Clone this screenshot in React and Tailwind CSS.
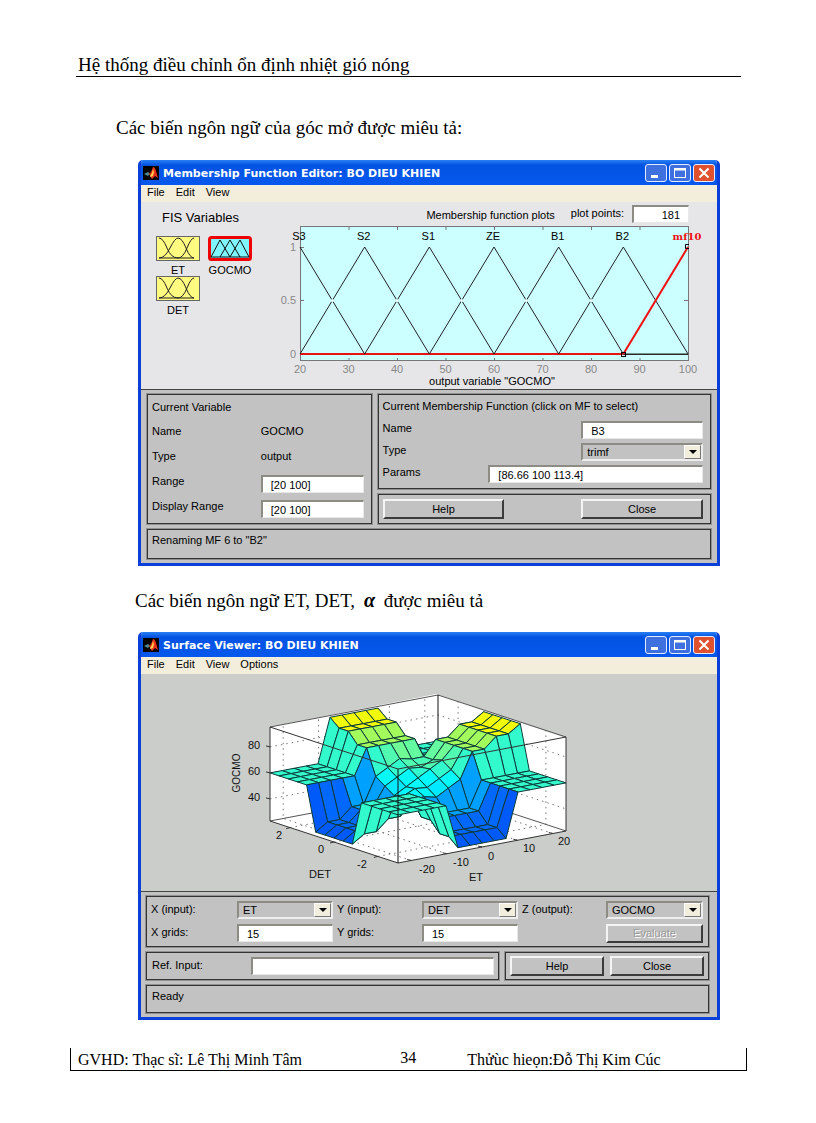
import React from "react";

const FRAME = "border border-[#333] outline-1 outline-[#909090]";
const FIELD =
  "h-[18px] min-w-0 rounded-none border-t-2 border-l-2 border-r border-b border-t-[#8c8c84] border-l-[#8c8c84] border-r-[#e8e8e8] border-b-[#e8e8e8] bg-white px-2 text-[11px] leading-none text-black outline-none";
const LABEL = "text-[11px] leading-4 text-black";

function MatlabLogo() {
  return (
    <svg viewBox="0 0 16 14" className="h-[14px] w-4 shrink-0" aria-hidden="true">
      <rect width="16" height="14" fill="#000" />
      <path d="M1 8l4-2 2 2-2 2z" fill="#4a8f98" />
      <path d="M5 8l3-2 2-4 1-1v6l-3 4-1-2z" fill="#b03a12" />
      <path d="M10 1q2 0 3 4l2 7-3-2-3 3-2-3z" fill="#e8301a" />
      <path d="M10 3l1 3-1 4-2 1-1-1 2-3z" fill="#ffd24a" />
    </svg>
  );
}

function CaptionButton({ kind }) {
  const tone = kind === "Close" ? "bg-[#e0522f]" : "bg-[#3f70e0]";
  return (
    <button
      type="button"
      aria-label={kind}
      className={`flex h-[18px] w-[22px] items-center justify-center rounded-[3px] border border-[#e6ecff] ${tone}`}
    >
      <svg viewBox="0 0 20 16" className="h-4 w-5" fill="none" stroke="#fff">
        {kind === "Minimize" && <path d="M5 11.5h7" strokeWidth="3" />}
        {kind === "Maximize" && (
          <>
            <rect x="4.5" y="3.5" width="11" height="9" />
            <path d="M4 4.5h12" strokeWidth="2" />
          </>
        )}
        {kind === "Close" && <path d="M5.5 3.5l9 9M14.5 3.5l-9 9" strokeWidth="2" />}
      </svg>
    </button>
  );
}

function AppWindow({ title, menus, children }) {
  return (
    <section className="overflow-hidden rounded-t-[5px] border-x-3 border-b-3 border-[#0a3fd8] font-['Liberation_Sans',Arial,sans-serif]">
      <header className="flex h-[25px] items-center gap-1 bg-linear-to-b from-[#2a80f4] via-[#0353e2] via-20% to-[#0658ee] pt-px pr-[2px] pl-[2px]">
        <MatlabLogo />
        <h2 className="grow pt-px font-['DejaVu_Sans',Verdana,sans-serif] text-[11px] font-bold whitespace-nowrap text-white">
          {title}
        </h2>
        <div className="flex gap-[2px]">
          <CaptionButton kind="Minimize" />
          <CaptionButton kind="Maximize" />
          <CaptionButton kind="Close" />
        </div>
      </header>
      <nav className="flex h-[17px] items-start gap-[11px] bg-[#f3eedb] px-[6px]">
        {menus.map((m) => (
          <button key={m} type="button" className="text-[11px] leading-[15px] text-black">
            {m}
          </button>
        ))}
      </nav>
      {children}
    </section>
  );
}

function PushButton({ children, className = "h-5", disabled }) {
  return (
    <button
      type="button"
      disabled={disabled}
      className={`border-2 border-t-[#f4f4f4] border-l-[#f4f4f4] border-r-[#3c3c3c] border-b-[#3c3c3c] bg-[#c2c2c2] text-[11px] leading-none ${
        disabled ? "text-[#9a9a9a] [text-shadow:1px_1px_0_#fff]" : "text-black"
      } ${className}`}
    >
      {children}
    </button>
  );
}

function DropDown({ id, value, className = "" }) {
  return (
    <div className={`relative flex h-[18px] ${className}`}>
      <select
        id={id}
        defaultValue={value}
        className="h-full w-full appearance-none rounded-none border-2 border-t-[#8c8c84] border-l-[#8c8c84] border-r-[#eee] border-b-[#eee] bg-[#c2c2c2] px-1 text-[11px] leading-none text-black outline-none"
      >
        <option>{value}</option>
      </select>
      <span className="pointer-events-none absolute top-[2px] right-[2px] flex h-[14px] w-[17px] items-center justify-center border border-t-white border-l-white border-r-[#777] border-b-[#777] bg-[#f1eedd]">
        <svg viewBox="0 0 8 4" className="h-1 w-2">
          <path d="M0 0h8L4 4z" fill="#000" />
        </svg>
      </span>
    </div>
  );
}

function VariableIcon({ name, kind }) {
  const output = kind === "output";
  return (
    <button type="button" className="flex flex-col items-center gap-[3px] text-[11px] leading-3 text-black">
      <svg viewBox="0 0 44 25" className="h-[25px] w-11" fill="none">
        <rect
          x={output ? 1.5 : 0.5}
          y={output ? 1.5 : 0.5}
          width={output ? 41 : 43}
          height={output ? 22 : 24}
          rx={output ? 2 : 0}
          fill={output ? "#7ff5ff" : "#fffb80"}
          stroke={output ? "#f00000" : "#666"}
          strokeWidth={output ? 3 : 1}
        />
        {output ? (
          <path d="M3 21L12 4l10 17M12 21L22 4l10 17M22 21L32 4l9 17M3 21h38" stroke="#111" />
        ) : (
          <path
            d="M3 2q4 0 8 10t11 10M3 22q6 0 11-10t8-10q4 0 8 10t8 10M38 2q-3 0-7 10t-9 10M3 22h35"
            stroke="#222"
          />
        )}
      </svg>
      {name}
    </button>
  );
}

const MF_NAMES = ["S3", "S2", "S1", "ZE", "B1", "B2"];
const mfX = (k) => 300 + (388 * k) / 6;

function MembershipPlot() {
  return (
    <svg
      viewBox="275 223 442 166"
      className="block w-full font-['Liberation_Sans',Arial,sans-serif] text-[11px]"
      role="img"
      aria-label="Membership function plots"
    >
      <rect x="300.5" y="226.5" width="388" height="134" fill="#ccffff" stroke="#777" />
      <g stroke="#777">
        {[1, 2, 3, 4, 5, 6, 7].map((k) => (
          <path key={k} d={`M${300.5 + 48.5 * k} 227v3M${300.5 + 48.5 * k} 361v-3`} />
        ))}
        <path d="M301 247.5h3M301 300.5h3M688 300.5h-4" />
      </g>
      <path d={`M${mfX(5)} 354.5H688`} stroke="#333" />
      <path d={`M300 354H${mfX(5)}`} stroke="#e81414" strokeWidth="2" />
      <g stroke="#222" fill="none">
        {[0, 1, 2, 3, 4, 5].map((k) => (
          <path key={k} d={`M${mfX(k)} 247L${mfX(k + 1)} 354M${mfX(k)} 354L${mfX(k + 1)} ${k < 5 ? 247 : 354}`} />
        ))}
      </g>
      {[0, 1, 2, 3, 4].map((k) => (
        <circle key={k} cx={mfX(k + 0.5)} cy="300.5" r="1.5" fill="#e8ffff" />
      ))}
      <path d={`M${mfX(5)} 354L688 247`} stroke="#f01010" strokeWidth="2" />
      <g fill="none" stroke="#000">
        <rect x="621.5" y="352.5" width="4" height="4" />
        <path d="M689 244.5h-3.5v4h3.5" />
      </g>
      <g textAnchor="middle" fill="#000">
        {MF_NAMES.map((n, k) => (
          <text key={n} x={mfX(k) - 1} y="240">
            {n}
          </text>
        ))}
        <text x="492" y="385">
          output variable "GOCMO"
        </text>
        <text x="687" y="240" fill="#f01010" className="font-['DejaVu_Serif',serif] text-[10px] font-bold">
          mf10
        </text>
      </g>
      <g textAnchor="middle" fill="#888">
        {[20, 30, 40, 50, 60, 70, 80, 90, 100].map((v, k) => (
          <text key={v} x={300 + 48.5 * k} y="373">
            {v}
          </text>
        ))}
      </g>
      <g textAnchor="end" fill="#888">
        <text x="296" y="251">1</text>
        <text x="296" y="304">0.5</text>
        <text x="296" y="358">0</text>
      </g>
    </svg>
  );
}

/* Oblique view of the rule surface on a 15 x 15 grid */
const Z_MIN = 23;
const project = (i, j, z) => [
  398 + ((i + 7) / 14) * 168 - ((j + 7) / 14) * 128,
  863 - ((i + 7) / 14) * 32 - ((j + 7) / 14) * 42 - (z - Z_MIN) * 1.3,
];
const RAMP = [0, 0.15, 0.3, 0.58, 0.58, 0.82, 0.82, 1];
const slope = (n) => Math.sign(n) * RAMP[Math.abs(n)];
const mid = (n) => (Math.abs(n) <= 2 ? 1 : 0);
function height(i, j) {
  // Both inputs near the centre and pulling the same way: the stronger rule wins
  if (i * j > 0 && mid(i) && mid(j)) {
    return 60 + 34 * 0.8 * Math.sign(i) * Math.max(Math.abs(slope(i)), Math.abs(slope(j)));
  }
  return 60 + 34 * (slope(j) * mid(i) + slope(i) * mid(j));
}
const JET = [
  [30, 0, 90, 250],
  [36, 0, 130, 255],
  [41, 0, 165, 255],
  [47, 0, 205, 255],
  [51, 0, 245, 255],
  [57, 10, 250, 245],
  [60, 50, 250, 205],
  [70, 110, 250, 150],
  [80, 165, 250, 90],
  [86, 238, 250, 15],
  [94, 250, 250, 0],
];
function jet(z) {
  if (z <= JET[0][0]) return `rgb(${JET[0].slice(1).join(",")})`;
  for (let k = 1; k < JET.length; k++) {
    if (z <= JET[k][0]) {
      const a = JET[k - 1];
      const b = JET[k];
      const t = (z - a[0]) / (b[0] - a[0]);
      return `rgb(${[1, 2, 3].map((c) => Math.round(a[c] + t * (b[c] - a[c]))).join(",")})`;
    }
  }
  return "rgb(250,250,0)";
}
const FACES = [];
for (let i = 6; i >= -7; i--) {
  for (let j = 6; j >= -7; j--) {
    FACES.push({
      key: `${i},${j}`,
      fill: jet(height(i, j)),
      points: [
        [i, j],
        [i + 1, j],
        [i + 1, j + 1],
        [i, j + 1],
      ]
        .map(([a, b]) => project(a, b, height(a, b)).map((v) => v.toFixed(1)).join(","))
        .join(" "),
    });
  }
}
const Z_MAX = 95.3;
const line = (...pts) => "M" + pts.map((p) => project(...p).map((v) => v.toFixed(1)).join(" ")).join("L");
const X_TICKS = [-5.9, -2.95, 0, 2.95, 5.9];
const Y_TICKS = [-4.8, 0, 4.8];

function SurfacePlot() {
  return (
    <svg
      viewBox="141 674 576 217"
      className="block w-full bg-[#cacdca] font-['Liberation_Sans',Arial,sans-serif] text-[11px]"
      role="img"
      aria-label="Surface of GOCMO over ET and DET"
    >
      <path d="M270 821V727L436 694L566 738V831L398 863Z" fill="#fff" />
      <g fill="none" stroke="#777" strokeDasharray="1.5 4">
        {X_TICKS.map((t) => (
          <path key={t} d={line([t, -7, Z_MIN], [t, 7, Z_MIN], [t, 7, Z_MAX])} />
        ))}
        {Y_TICKS.map((t) => (
          <path key={t} d={line([-7, t, Z_MIN], [7, t, Z_MIN], [7, t, Z_MAX])} />
        ))}
        {[40, 60, 80].map((z) => (
          <path key={z} d={line([-7, 7, z], [7, 7, z], [7, -7, z])} />
        ))}
      </g>
      <g fill="none" stroke="#555">
        <path d={line([-7, 7, Z_MAX], [7, 7, Z_MAX], [7, -7, Z_MAX])} />
        <path d={line([-7, 7, Z_MIN], [7, 7, Z_MIN], [7, -7, Z_MIN])} />
        <path d={line([7, 7, Z_MIN], [7, 7, Z_MAX])} stroke="#111" />
      </g>
      <g stroke="#0c3a3a" strokeWidth="1" strokeLinejoin="round">
        {FACES.map((f) => (
          <polygon key={f.key} points={f.points} fill={f.fill} />
        ))}
      </g>
      <g fill="none" stroke="#333">
        <path d={line([-7, 7, Z_MIN], [-7, -7, Z_MIN], [7, -7, Z_MIN], [7, -7, Z_MAX], [-7, -7, Z_MAX], [-7, 7, Z_MAX], [-7, 7, Z_MIN])} />
        <path d={line([-7, -7, Z_MIN], [-7, -7, Z_MAX])} stroke="#111" />
        {[40, 60, 80].map((z) => {
          const [x, y] = project(-7, 7, z);
          return <path key={z} d={`M${x} ${y}l-4 -1`} />;
        })}
        {X_TICKS.map((t) => {
          const [x, y] = project(t, -7, Z_MIN);
          return <path key={t} d={`M${x} ${y}l-4 -1`} />;
        })}
        {Y_TICKS.map((t) => {
          const [x, y] = project(-7, t, Z_MIN);
          return <path key={t} d={`M${x} ${y}l-4 1`} />;
        })}
      </g>
      <g textAnchor="middle" fill="#111">
        <text x="254" y="749">80</text>
        <text x="254" y="775">60</text>
        <text x="254" y="801">40</text>
        <text x="279" y="839">2</text>
        <text x="321" y="853">0</text>
        <text x="362" y="868">-2</text>
        <text x="320" y="878">DET</text>
        <text x="427" y="873">-20</text>
        <text x="461" y="866">-10</text>
        <text x="491" y="860">0</text>
        <text x="529" y="852">10</text>
        <text x="564" y="845">20</text>
        <text x="476" y="881">ET</text>
        <text transform="translate(240 773) rotate(-90)" className="text-[10px]">
          GOCMO
        </text>
      </g>
    </svg>
  );
}

function MembershipEditor() {
  return (
    <AppWindow title="Membership Function Editor: BO DIEU KHIEN" menus={["File", "Edit", "View"]}>
      <div className="grid grid-cols-[134fr_442fr] bg-[#e6e6e9]">
        <div className="pt-2 pl-[15px]">
          <h3 className="pl-[6px] text-[13px] leading-4 whitespace-nowrap">FIS Variables</h3>
          <div className="mt-[10px] grid grid-cols-[44px_44px] gap-x-2">
            <VariableIcon name="ET" />
            <VariableIcon name="GOCMO" kind="output" />
            <VariableIcon name="DET" />
          </div>
        </div>
        <div>
          <div className="flex h-[21px] items-start justify-end pt-[3px] pr-7">
            <h3 className="mr-4 pt-[2px] text-[11px] leading-4">Membership function plots</h3>
            <label htmlFor="points" className="mr-2 text-[11px] leading-4">
              plot points:
            </label>
            <input id="points" defaultValue="181" className={`${FIELD} w-[57px] px-1 text-right`} />
          </div>
          <MembershipPlot />
        </div>
      </div>
      <div className="grid grid-cols-[225fr_334fr] gap-x-[6px] gap-y-[5px] border-t border-[#444] bg-[#c2c2c2] px-[6px] pt-1 pb-1">
        <div
          className={`${FRAME} grid grid-cols-[109fr_103fr] grid-rows-[23px_25px_25px_25px_25px] items-center pr-[7px] pb-[5px] pl-1`}
        >
          <h3 className={`${LABEL} col-span-2`}>Current Variable</h3>
          <span className={LABEL}>Name</span>
          <span className={LABEL}>GOCMO</span>
          <span className={LABEL}>Type</span>
          <span className={LABEL}>output</span>
          <label htmlFor="range" className={LABEL}>Range</label>
          <input id="range" defaultValue="[20 100]" className={`${FIELD} self-end`} />
          <label htmlFor="display" className={LABEL}>Display Range</label>
          <input id="display" defaultValue="[20 100]" className={`${FIELD} self-end`} />
        </div>
        <div className="flex flex-col gap-[5px]">
          <div className={`${FRAME} grow pr-[7px] pl-1`}>
            <h3 className={`${LABEL} flex h-[22px] items-center`}>Current Membership Function (click on MF to select)</h3>
            <div className="flex h-[22px] items-center justify-between">
              <label htmlFor="mfname" className={LABEL}>Name</label>
              <input id="mfname" defaultValue="B3" className={`${FIELD} w-[38%] self-end px-1`} />
            </div>
            <div className="flex h-[22px] items-center justify-between">
              <label htmlFor="mftype" className={LABEL}>Type</label>
              <DropDown id="mftype" value="trimf" className="w-[38%] self-end" />
            </div>
            <div className="flex h-[22px] items-center justify-between">
              <label htmlFor="params" className={LABEL}>Params</label>
              <input id="params" defaultValue="[86.66 100 113.4]" className={`${FIELD} w-[67%] self-end`} />
            </div>
          </div>
          <div className={`${FRAME} flex justify-between py-1 pr-[7px] pl-1`}>
            <PushButton className="h-5 w-[38%]">Help</PushButton>
            <PushButton className="h-5 w-[38%]">Close</PushButton>
          </div>
        </div>
        <div className={`${FRAME} col-span-2 h-[30px] px-1 pt-[2px]`}>
          <p role="status" className={LABEL}>Renaming MF 6 to "B2"</p>
        </div>
      </div>
    </AppWindow>
  );
}

function SurfaceViewer() {
  return (
    <AppWindow title="Surface Viewer: BO DIEU KHIEN" menus={["File", "Edit", "View", "Options"]}>
      <SurfacePlot />
      <div className="flex flex-col gap-[5px] border-t border-[#444] bg-[#c2c2c2] pt-1 pr-2 pb-1 pl-[5px]">
        <div className={`${FRAME} grid grid-cols-[86fr_96fr_89fr_96fr_88fr_97fr] items-start gap-y-[5px] pt-1 pr-[5px] pb-[3px] pl-1`}>
          <label htmlFor="xin" className={LABEL}>X (input):</label>
          <DropDown id="xin" value="ET" />
          <label htmlFor="yin" className={`${LABEL} pl-1`}>Y (input):</label>
          <DropDown id="yin" value="DET" />
          <label htmlFor="zout" className={`${LABEL} pl-1`}>Z (output):</label>
          <DropDown id="zout" value="GOCMO" />
          <label htmlFor="xgrid" className={LABEL}>X grids:</label>
          <input id="xgrid" defaultValue="15" className={FIELD} />
          <label htmlFor="ygrid" className={`${LABEL} pl-1`}>Y grids:</label>
          <input id="ygrid" defaultValue="15" className={FIELD} />
          <PushButton disabled className="col-start-6 h-[19px]">Evaluate</PushButton>
        </div>
        <div className="grid grid-cols-[353fr_204fr] gap-[6px]">
          <div className={`${FRAME} flex items-start py-1 pr-1 pl-[5px]`}>
            <label htmlFor="ref" className={`${LABEL} w-[99px]`}>Ref. Input:</label>
            <input id="ref" defaultValue="" className={`${FIELD} grow`} />
          </div>
          <div className={`${FRAME} flex gap-[6px] px-1 py-[3px]`}>
            <PushButton className="h-5 grow basis-0">Help</PushButton>
            <PushButton className="h-5 grow basis-0">Close</PushButton>
          </div>
        </div>
        <div className={`${FRAME} h-7 px-[5px] pt-[2px]`}>
          <p role="status" className={LABEL}>Ready</p>
        </div>
      </div>
    </AppWindow>
  );
}

export default function App() {
  return (
    <div className="min-h-screen bg-white pr-[75px] pl-[76px] font-['Liberation_Serif','Times_New_Roman',serif] text-[19px] leading-6 text-black">
      <header className="border-b border-black pt-[53px] pl-[2px]">
        <h1 className="h-[23px]">Hệ thống điều chỉnh ổn định nhiệt gió nóng</h1>
      </header>
      <main>
        <p className="mt-[39px] pl-10">Các biến ngôn ngữ của góc mở được miêu tả:</p>
        <div className="mt-5 mr-[21px] ml-[62px]">
          <MembershipEditor />
        </div>
        <p className="mt-[23px] pl-[59px]">
          Các biến ngôn ngữ ET, DET, <b className="px-1 text-[20px] leading-none italic">α</b> được miêu tả
        </p>
        <div className="mt-[19px] mr-[21px] ml-[62px]">
          <SurfaceViewer />
        </div>
      </main>
      <footer className="mt-7 -mr-[6px] -ml-[6px] grid h-[23px] grid-cols-[326fr_68fr_282fr] border-x border-b border-black pl-[7px] text-[16px]">
        <span className="whitespace-nowrap">GVHD: Thạc sĩ: Lê Thị Minh Tâm</span>
        <span className="-mt-[2px]">34</span>
        <span className="whitespace-nowrap">Thửùc hieọn:Đỗ Thị Kim Cúc</span>
      </footer>
    </div>
  );
}
